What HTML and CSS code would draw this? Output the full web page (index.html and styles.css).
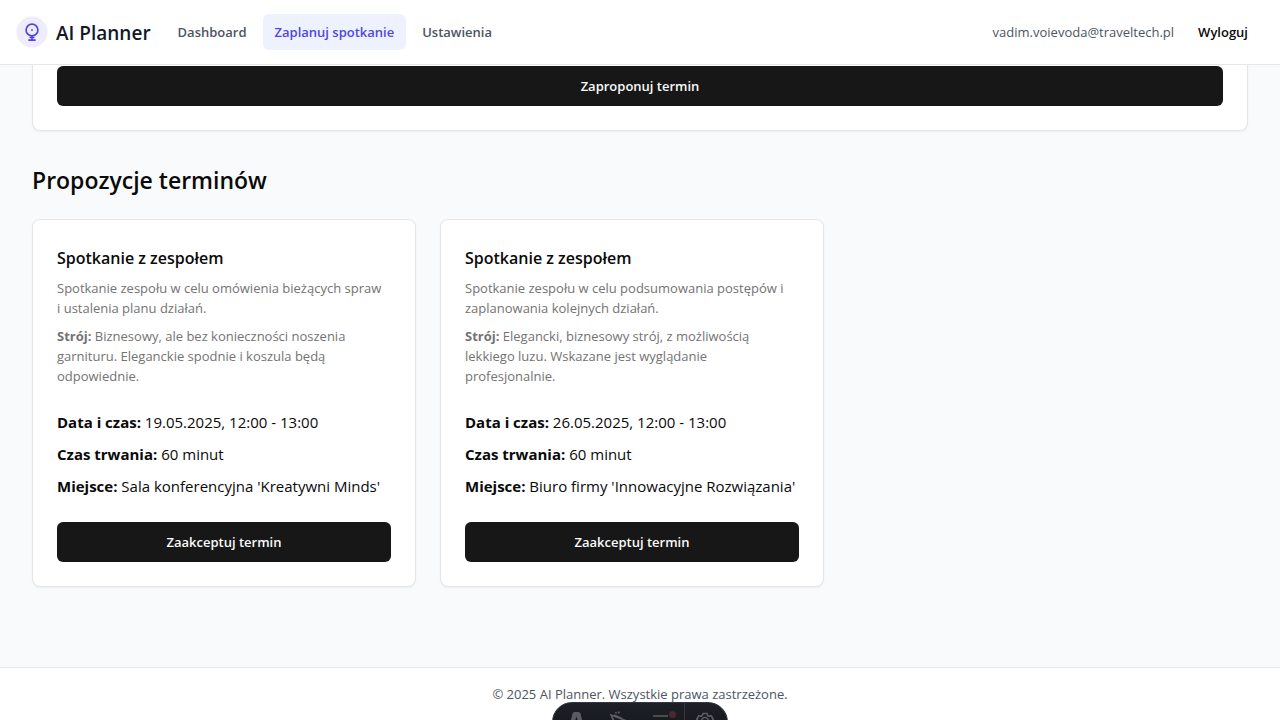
FILE: index.html
```html
<!DOCTYPE html>
<html lang="pl">
<head>
<meta charset="utf-8">
<meta name="viewport" content="width=device-width, initial-scale=1">
<title>AI Planner</title>
<link rel="stylesheet" href="styles.css">
</head>
<body>
<header class="topbar">
  <a class="brand" href="#">
    <svg class="brand-logo" viewBox="0 0 32 32" aria-hidden="true">
      <circle cx="16" cy="16" r="15.5" fill="#eeecfd"/>
      <g fill="none" stroke="#5046e5" stroke-width="1.7">
        <circle cx="16" cy="14" r="5.9"/>
        <path d="M16 20v4M12.3 24.2h7.4M13.6 21.5h4.8"/>
      </g>
      <circle cx="16" cy="14" r="0.9" fill="#5046e5"/>
    </svg>
    <span class="brand-name">AI Planner</span>
  </a>
  <nav class="nav">
    <a class="nav-link" href="#">Dashboard</a>
    <a class="nav-link nav-link-active" href="#" aria-current="page">Zaplanuj spotkanie</a>
    <a class="nav-link" href="#">Ustawienia</a>
  </nav>
  <div class="account">
    <span class="email">vadim.voievoda@traveltech.pl</span>
    <button class="logout" type="button">Wyloguj</button>
  </div>
</header>
<main class="main">
  <section class="form-card">
    <button class="primary" type="submit">Zaproponuj termin</button>
  </section>
  <h2 class="section-title">Propozycje terminów</h2>
  <div class="proposals">
    <article class="card">
      <h3 class="card-title">Spotkanie z zespołem</h3>
      <p class="note">Spotkanie zespołu w celu omówienia bieżących spraw i&nbsp;ustalenia planu działań.</p>
      <p class="note note-dress"><strong>Strój:</strong> Biznesowy, ale bez konieczności noszenia garnituru. Eleganckie spodnie i koszula będą odpowiednie.</p>
      <div class="details">
        <p><strong>Data i czas:</strong> 19.05.2025, 12:00 - 13:00</p>
        <p><strong>Czas trwania:</strong> 60 minut</p>
        <p><strong>Miejsce:</strong> Sala konferencyjna 'Kreatywni Minds'</p>
      </div>
      <button class="primary" type="button">Zaakceptuj termin</button>
    </article>
    <article class="card">
      <h3 class="card-title">Spotkanie z zespołem</h3>
      <p class="note">Spotkanie zespołu w celu podsumowania postępów i zaplanowania kolejnych działań.</p>
      <p class="note note-dress"><strong>Strój:</strong> Elegancki, biznesowy strój, z możliwością lekkiego luzu. Wskazane jest wyglądanie profesjonalnie.</p>
      <div class="details">
        <p><strong>Data i czas:</strong> 26.05.2025, 12:00 - 13:00</p>
        <p><strong>Czas trwania:</strong> 60 minut</p>
        <p><strong>Miejsce:</strong> Biuro firmy 'Innowacyjne Rozwiązania'</p>
      </div>
      <button class="primary" type="button">Zaakceptuj termin</button>
    </article>
  </div>
</main>
<footer class="footer">© 2025 AI Planner. Wszystkie prawa zastrzeżone.</footer>
<div class="devbar">
  <button class="devbar-item" type="button" aria-label="Menu">
    <svg viewBox="0 0 20 20" aria-hidden="true"><path fill="#5a5c62" d="M2 17 5.500 2.600Q6 1 7.500 1h4Q13 1 13.500 2.600L17 17q-2-.9-4-1.200L9.500 5.500 6 15.800q-2 .3-4 1.200z"/></svg>
  </button>
  <button class="devbar-item" type="button" aria-label="Inspect">
    <svg viewBox="0 0 20 20" aria-hidden="true"><path fill="none" stroke="#5a5c62" stroke-width="1.600" d="M1 4l13.500 5-5 2.500-3 5zM5.500 1l1 1.500M9 .5l-.5 2M1 4l4 8M4 4l8 3.500"/></svg>
  </button>
  <button class="devbar-item" type="button" aria-label="Audit">
    <svg viewBox="0 0 20 20" aria-hidden="true"><path stroke="#5a5c62" stroke-width="1.500" d="M0 5h15M0 10h17M0 15h15"/></svg>
    <span class="devbar-alert"></span>
  </button>
  <button class="devbar-item devbar-settings" type="button" aria-label="Settings">
    <svg viewBox="0 0 20 20" aria-hidden="true"><g fill="none" stroke="#5a5c62" stroke-width="1.700"><path d="M8 2.500h4l.7 2 1.500.8 2-.5 2 3.400-1.400 1.800 1.400 2-2 3.400-2-.5-1.500.8-.7 2H8l-.7-2-1.500-.8-2 .5-2-3.400 1.400-2-1.400-1.800 2-3.400 2 .5 1.500-.8z"/><circle cx="10" cy="10" r="3.500"/></g></svg>
  </button>
</div>
</body>
</html>
```

FILE: styles.css
```css
* { box-sizing: border-box; }
body {
  margin: 0;
  min-height: 100vh;
  display: flex;
  flex-direction: column;
  background: #f9fafb;
  color: #0a0a0a;
  font-family: "Segoe UI", "Open Sans", "Noto Sans", sans-serif;
  font-size: 15px;
  line-height: 24px;
}
h2, h3, p { margin: 0; }
a { color: inherit; text-decoration: none; }
button { font: inherit; border: 0; padding: 0; cursor: pointer; }
.topbar {
  position: sticky;
  top: 0;
  z-index: 2;
  display: flex;
  align-items: center;
  padding: 14px 32px 14px 16px;
  background: #fff;
  border-bottom: 1px solid #e5e7eb;
}
.brand { display: flex; align-items: center; gap: 8px; }
.brand-logo { width: 32px; height: 32px; }
.brand-name { padding-top: 2px; font-size: 19px; line-height: 28px; font-weight: 600; color: #111827; }
.nav { display: flex; gap: 4px; margin-left: 15px; }
.nav-link {
  padding: 8px 12px;
  border-radius: 6px;
  font-size: 13px;
  line-height: 20px;
  font-weight: 600;
  color: #4b5563;
}
.nav-link-active { background: #eef2ff; color: #4f46e5; }
.account {
  display: flex;
  align-items: center;
  gap: 24px;
  margin-left: auto;
  font-size: 13px;
  line-height: 20px;
}
.email { color: #4b5563; }
.logout { background: none; color: #0a0a0a; font-weight: 600; }
.main { flex: 1; padding: 0 32px 80px; }
.form-card {
  padding: 1px 24px 24px;
  background: #fff;
  border: 1px solid #e5e5e5;
  border-top: 0;
  border-radius: 0 0 8px 8px;
  box-shadow: 0 1px 2px rgba(0, 0, 0, 0.05);
}
.primary {
  display: block;
  width: 100%;
  padding: 10px 16px;
  border-radius: 6px;
  background: #171717;
  color: #fafafa;
  font-size: 13px;
  line-height: 20px;
  font-weight: 600;
}
.section-title {
  margin: 33px 0 23px;
  font-size: 23px;
  line-height: 32px;
  font-weight: 600;
}
.proposals {
  display: grid;
  grid-template-columns: repeat(auto-fill, min(100%, 384px));
  gap: 24px;
}
.card {
  padding: 24px;
  background: #fff;
  border: 1px solid #e5e5e5;
  border-radius: 8px;
  box-shadow: 0 1px 2px rgba(0, 0, 0, 0.05);
}
.card-title { font-size: 16px; line-height: 28px; font-weight: 600; margin-bottom: 6px; }
.note { font-size: 13px; line-height: 20px; color: #737373; }
.note-dress { margin-top: 8px; }
.details { display: grid; gap: 8px; margin: 24px 0; color: #0a0a0a; }
.footer {
  padding: 16px;
  border-top: 1px solid #e5e7eb;
  background: #fff;
  color: #4b5563;
  font-size: 13px;
  line-height: 20px;
  text-align: center;
}
.devbar {
  position: fixed;
  bottom: -22px;
  left: 50%;
  z-index: 3;
  display: flex;
  height: 40px;
  padding: 0 2px;
  transform: translateX(-50%);
  overflow: hidden;
  border: 1px solid #343841;
  border-radius: 20px;
  background: linear-gradient(#1d2026, #13151a);
}
.devbar-item {
  position: relative;
  display: flex;
  align-items: center;
  justify-content: center;
  width: 43px;
  padding-bottom: 2px;
  background: none;
}
.devbar-item svg { width: 20px; height: 20px; }
.devbar-settings { width: 41px; border-left: 1px solid #343841; }
.devbar-alert {
  position: absolute;
  top: 8px;
  right: 8px;
  width: 7px;
  height: 7px;
  border-radius: 50%;
  background: #4b2634;
}
```
